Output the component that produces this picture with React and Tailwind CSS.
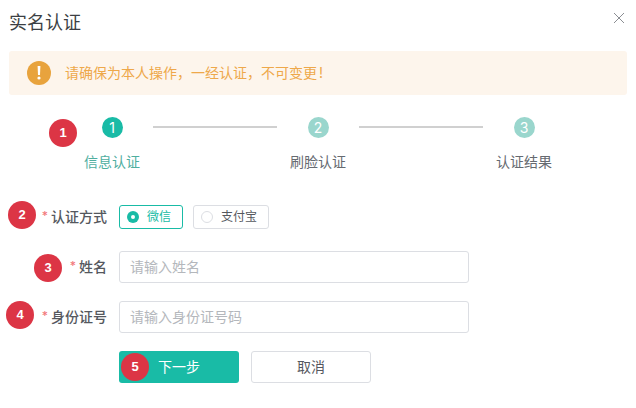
import React from "react";

const font = "font-['Inter','Noto_Sans_CJK_SC',sans-serif]";

function Badge({ n, className }) {
  return (
    <span className={"absolute flex h-[28px] w-[28px] items-center justify-center rounded-full bg-[#dc3545] text-[13px] font-bold text-white font-['Liberation_Sans',sans-serif] " + className}>
      {n}
    </span>
  );
}

function Step({ n, label, active }) {
  return (
    <div className="flex w-[82px] flex-col items-center">
      <span className={"flex h-[21px] w-[21px] items-center justify-center rounded-full text-[14px] leading-none text-white " + (active ? "bg-[#19bba6]" : "bg-[#9ad6cd]")}>
        {n}
      </span>
      <span className={"mt-[14px] whitespace-nowrap text-[14px] leading-[20px] " + (active ? "text-[#4fae9f]" : "text-[#666a70]")}>
        {label}
      </span>
    </div>
  );
}

function Line() {
  return <div className="mt-[9px] h-[2px] w-[124px] bg-[#d0d0d0]" />;
}

function Row({ label, children, className }) {
  return (
    <div className={"flex items-center " + className}>
      <label className="flex w-[107px] shrink-0 items-center justify-end pb-[2px] text-[14px] font-medium text-[#55585e]">
        <span className="mr-[3px] text-[12px] text-[#f2797d]">*</span>
        {label}
      </label>
      <div className="ml-[12px] flex items-center gap-[10px]">{children}</div>
    </div>
  );
}

function Radio({ label, checked }) {
  return (
    <div className={"flex h-[24px] items-center rounded-[3px] border text-[12px] " + (checked ? "w-[64px] border-[#19bba6] pl-[7px] text-[#19bba6]" : "w-[76px] border-[#dcdee3] pl-[7px] text-[#55585e]")}>
      <span className={"flex h-[12px] w-[12px] items-center justify-center rounded-full " + (checked ? "bg-[#19bba6]" : "border border-[#dcdee3] bg-white")}>
        {checked && <span className="h-[4px] w-[4px] rounded-full bg-white" />}
      </span>
      <span className="ml-[8px] whitespace-nowrap">{label}</span>
    </div>
  );
}

function Field({ placeholder }) {
  return (
    <div className="flex h-[32px] w-[350px] items-center rounded-[3px] border border-[#dcdee3] bg-white pb-[2px] pl-[10px] text-[14px] text-[#b4b7bc]">
      {placeholder}
    </div>
  );
}

export default function App() {
  return (
    <div className={"relative h-[408px] w-[636px] overflow-hidden bg-white " + font}>
      <div className="flex items-start justify-between pl-[9px] pr-[11px] pt-[10px]">
        <h1 className="text-[18px] font-normal leading-[26px] text-[#3c3f44]">实名认证</h1>
        <svg width="12" height="12" viewBox="0 0 12 12" className="mt-[2px]" stroke="#8b8e93" strokeWidth="1" fill="none">
          <path d="M1 1L11 11M11 1L1 11" />
        </svg>
      </div>

      <div className="ml-[9px] mt-[15px] flex h-[44px] w-[618px] items-center rounded-[3px] bg-[#fdf5ec] pl-[18px]">
        <span className="flex h-[24px] w-[24px] items-center justify-center rounded-full bg-[#e8a33d]">
          <svg width="4" height="14" viewBox="0 0 4 14" fill="#fff">
            <path d="M0.6 0h2.8L3 9H1z" />
            <circle cx="2" cy="12" r="1.6" />
          </svg>
        </span>
        <span className="ml-[14px] whitespace-nowrap pb-[2px] text-[14px] text-[#eea84a]">
          请确保为本人操作，一经认证，不可变更<span className="ml-[2px]">!</span>
        </span>
      </div>

      <div className="ml-[71px] mt-[22px] flex items-start">
        <Step n="1" label="信息认证" active />
        <Line />
        <Step n="2" label="刷脸认证" />
        <Line />
        <Step n="3" label="认证结果" />
      </div>

      <Row label="认证方式" className="mt-[33px] h-[24px]">
        <Radio label="微信" checked />
        <Radio label="支付宝" />
      </Row>
      <Row label="姓名" className="mt-[22px]">
        <Field placeholder="请输入姓名" />
      </Row>
      <Row label="身份证号" className="mt-[18px]">
        <Field placeholder="请输入身份证号码" />
      </Row>

      <div className="ml-[119px] mt-[18px] flex gap-[12px]">
        <button className="flex h-[32px] w-[120px] items-center justify-center rounded-[3px] bg-[#19bba6] pb-[2px] text-[14px] text-white">下一步</button>
        <button className="flex h-[32px] w-[120px] items-center justify-center rounded-[3px] border border-[#dcdee3] bg-white pb-[2px] text-[14px] text-[#55585e]">取消</button>
      </div>

      <Badge n="1" className="left-[49px] top-[119px]" />
      <Badge n="2" className="left-[8px] top-[201px]" />
      <Badge n="3" className="left-[34px] top-[254px]" />
      <Badge n="4" className="left-[6px] top-[301px]" />
      <Badge n="5" className="left-[121px] top-[353px]" />
    </div>
  );
}
